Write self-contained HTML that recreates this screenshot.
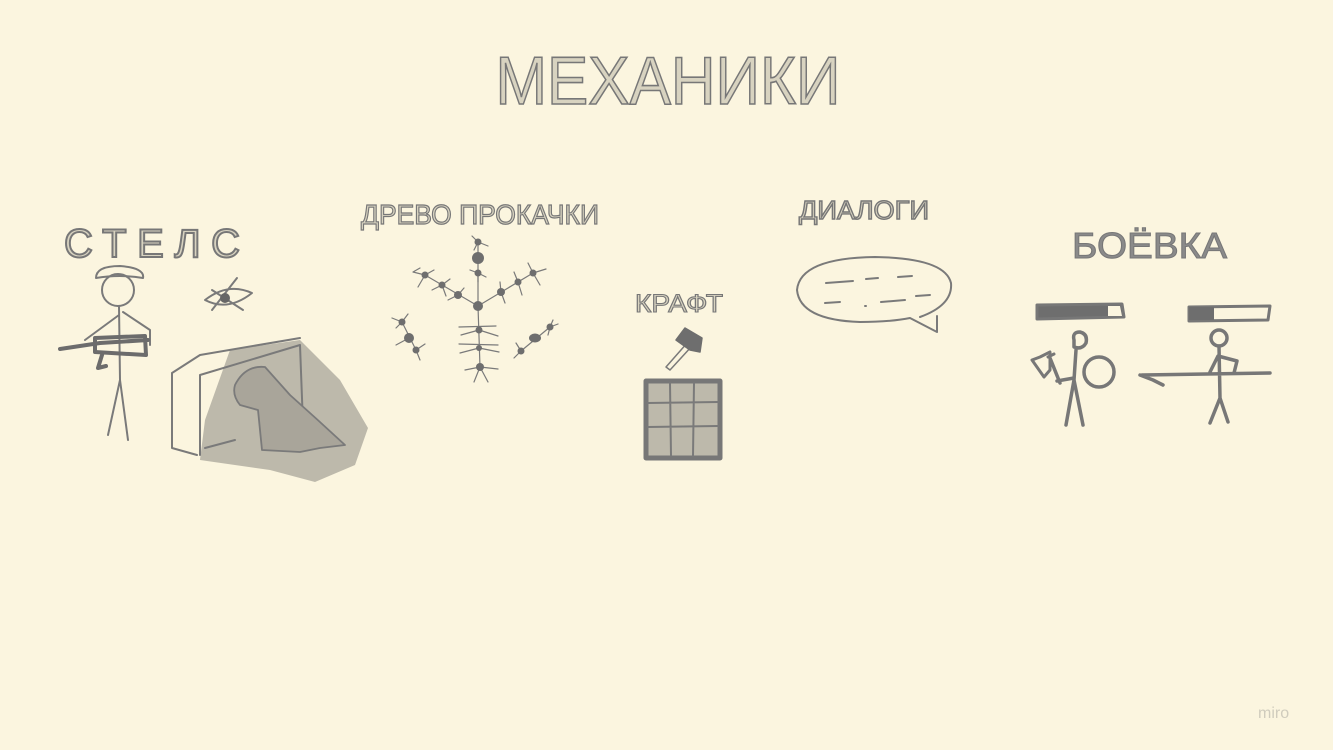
<!DOCTYPE html>
<html><head><meta charset="utf-8"><style>
html,body{margin:0;padding:0;background:#fbf5df;width:1333px;height:750px;overflow:hidden}
svg{display:block}
text{font-family:"Liberation Sans Narrow","Liberation Sans",sans-serif}
.t{fill:#d8d3c0;stroke:#777}
</style></head><body>
<svg width="1333" height="750" viewBox="0 0 1333 750" xmlns="http://www.w3.org/2000/svg">
<rect width="1333" height="750" fill="#fbf5df"/>
<text class="t" x="668" y="104" text-anchor="middle" font-size="68" textLength="345" lengthAdjust="spacingAndGlyphs" stroke-width="1.6">МЕХАНИКИ</text>
<text class="t" x="64" y="257" font-size="40" textLength="176" lengthAdjust="spacing" stroke-width="2">СТЕЛС</text>
<text class="t" x="361" y="224" font-size="28" textLength="238" lengthAdjust="spacingAndGlyphs" stroke-width="1.2">ДРЕВО ПРОКАЧКИ</text>
<text class="t" x="635" y="312" font-size="25" textLength="88" lengthAdjust="spacingAndGlyphs" stroke-width="1.1">КРАФТ</text>
<text class="t" x="799" y="219" font-size="26" textLength="130" lengthAdjust="spacingAndGlyphs" stroke-width="1.4">ДИАЛОГИ</text>
<text x="1072" y="258" font-size="36" textLength="155" lengthAdjust="spacingAndGlyphs" style="fill:#8a8a8a;stroke:#777" stroke-width="1">БОЁВКА</text>

<g fill="none" stroke="#7a7a7a" stroke-linecap="round" stroke-linejoin="round">
<!-- stealth -->
<path d="M200 460 L205 420 L230 350 L300 340 L340 380 L368 428 L355 465 L315 482 L270 470 Z" fill="#bdb9ab" stroke="none"/>
<path d="M172 373 L172 448 L197 455 M172 373 L200 355 L300 338 M200 375 L300 345 L303 425 M200 375 L200 455 M205 448 L235 440" stroke-width="2"/>
<path d="M235 385 Q245 365 265 367 L290 395 Q318 420 345 445 L320 448 L300 452 L262 450 L258 410 L240 405 Q232 395 235 385 Z" fill="#a9a59a" stroke-width="1.8"/>
<circle cx="118" cy="290" r="16" stroke-width="2"/>
<path d="M96 278 Q96 266 120 266 Q145 268 143 278 Q120 274 96 278" stroke-width="2"/>
<path d="M119 306 L120 380 L108 435 M120 380 L128 440 M119 315 L85 340 M123 312 L150 330 L150 345" stroke-width="2"/>
<path d="M60 349 L100 343 L148 340 M95 338 L145 336 L146 355 L95 352 Z M102 355 L98 368 L106 366" stroke-width="4" stroke="#6c6c6c"/>
<path d="M205 300 Q228 282 252 293 Q228 312 205 300 Z M212 310 L237 278 M212 290 L243 310" stroke-width="2"/>
<circle cx="225" cy="298" r="5" fill="#666" stroke="none"/>
<!-- tree -->
<g stroke-width="1.2">
<path d="M478 242 L478 306 L425 275 M478 306 L533 273 M478 306 L480 367 M402 322 L416 350 M521 351 L550 327"/>
<path d="M478 242 L472 236 M478 242 L488 246 M478 242 L474 250 M478 273 L470 270 M478 273 L486 277 M478 273 L478 282"/>
<path d="M425 275 L413 272 L420 268 M425 275 L418 287 M425 275 L434 270 M442 285 L432 290 M442 285 L450 279 M458 295 L448 300 M458 295 L464 288 M442 285 L446 296"/>
<path d="M533 273 L546 269 M533 273 L540 285 M533 273 L528 263 M518 282 L522 295 M518 282 L514 272 M501 292 L505 303 M501 292 L500 282"/>
<path d="M459 327 L496 326 M459 344 L498 345 M461 335 L479 330 L498 336 M460 353 L479 348 L499 352 M465 370 L480 367 L498 369 M474 382 L480 367 L488 382"/>
<path d="M396 328 L402 322 L392 318 M402 322 L408 314 M409 338 L396 345 M416 350 L420 360 M416 350 L425 344 M521 351 L514 358 M521 351 L516 343 M550 327 L558 324 M550 327 L548 335 M550 327 L553 320"/>
</g>
<g fill="#6e6e6e" stroke="none">
<circle cx="478" cy="306" r="5"/><circle cx="478" cy="258" r="6"/><circle cx="478" cy="242" r="3.5"/><circle cx="478" cy="273" r="3.5"/>
<circle cx="458" cy="295" r="4"/><circle cx="442" cy="285" r="3.5"/><circle cx="425" cy="275" r="3.5"/>
<circle cx="501" cy="292" r="4"/><circle cx="518" cy="282" r="3.5"/><circle cx="533" cy="273" r="3.5"/>
<circle cx="479" cy="330" r="3.5"/><circle cx="479" cy="348" r="3"/><circle cx="480" cy="367" r="4"/>
<circle cx="402" cy="322" r="3.5"/><circle cx="409" cy="338" r="5"/><circle cx="416" cy="350" r="3.5"/>
<ellipse cx="535" cy="338" rx="6" ry="4.5"/><circle cx="550" cy="327" r="3.5"/><circle cx="521" cy="351" r="3.5"/>
</g>
<!-- craft -->
<path d="M666 367 L688 342 L692 346 L670 370 Z" fill="#fbf5df" stroke-width="1.5"/>
<path d="M676 340 L685 328 L702 338 L700 352 L690 350 Z" fill="#6e6e6e" stroke="#6e6e6e" stroke-width="1.5"/>
<rect x="646" y="381" width="74" height="77" fill="#bdb9ab" stroke="#777" stroke-width="5"/>
<path d="M648 403 L718 402 M648 427 L718 426 M670 383 L671 456 M694 383 L693 456" stroke-width="2"/>
<!-- dialog -->
<path d="M920 317 Q953 305 951 283 Q945 258 875 257 Q800 258 797 290 Q800 320 860 322 Q890 322 910 318 L937 332 L937 316" stroke-width="2"/>
<path d="M826 283 L853 281 M866 279 L878 278 M898 277 L912 276 M825 303 L840 302 M865 306 L866 306 M881 302 L905 300 M916 296 L930 295" stroke-width="2"/>
<!-- combat -->
<path d="M1037 305 L1122 304 L1124 317 L1037 319 Z" fill="#6e6e6e" stroke="#777" stroke-width="3"/>
<path d="M1108 306 L1120 306 L1122 316 L1108 316 Z" fill="#fbf5df" stroke="none"/>
<path d="M1189 307 L1270 306 L1268 320 L1189 321 Z" fill="#fbf5df" stroke="#777" stroke-width="3"/>
<path d="M1189 307 L1214 307 L1214 320 L1189 320 Z" fill="#6e6e6e" stroke="none"/>
<g stroke="#777" stroke-width="3.5">
<path d="M1074 340 Q1072 332 1080 332 Q1088 334 1086 343 Q1082 350 1074 347 Z M1076 350 L1074 380 L1066 425 M1074 380 L1083 425 M1057 381 L1074 378 M1060 383 L1050 358"/>
<circle cx="1099" cy="372" r="15"/>
<path d="M1032 360 L1040 357 L1050 352 L1050 370 L1044 377 Z M1048 357 L1054 354" stroke-width="3"/>
<circle cx="1219" cy="338" r="8"/>
<path d="M1219 346 L1220 398 L1210 423 M1220 398 L1228 422 M1142 375 L1270 373 M1210 372 L1218 356 L1237 361 L1234 373 M1140 375 L1153 380 L1163 385"/>
</g>
</g>
<text x="1258" y="718" font-size="16" style="fill:#d0ccbd">miro</text>
</svg>
</body></html>
